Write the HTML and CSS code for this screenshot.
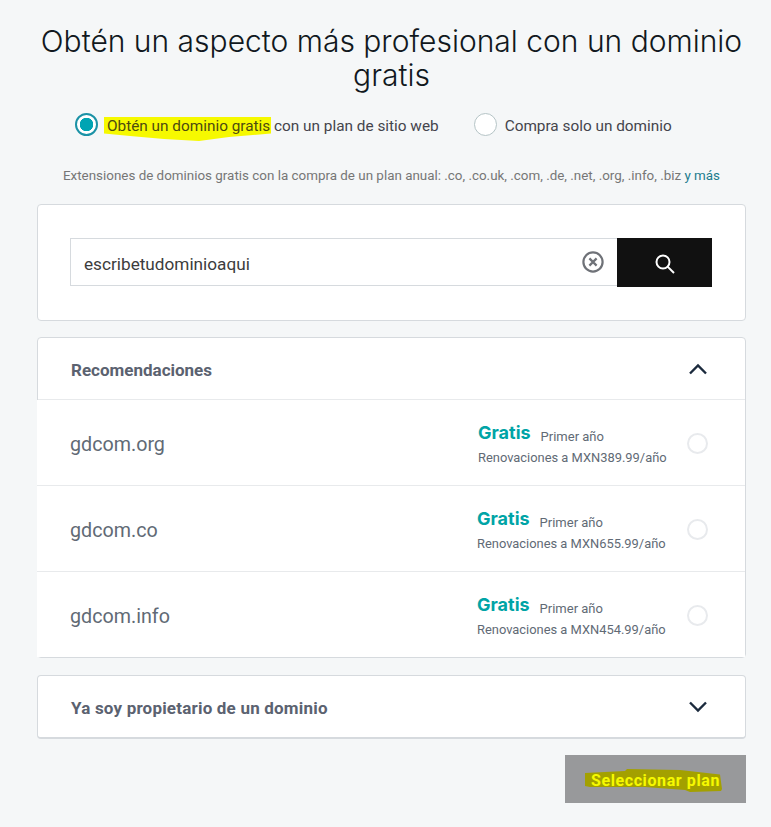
FILE: index.html
```html
<!DOCTYPE html>
<html lang="es">
<head>
  <meta charset="UTF-8" />
  <title>Obtén un dominio gratis</title>
  <link rel="stylesheet" href="styles.css">
</head>
<body>
  <h1 class="title">Obtén un aspecto más profesional con un dominio gratis</h1>

  <div class="mode-row">
    <div class="mode mode-free">
      <span class="radio radio-on"></span>
      <span class="mode-label"><span class="marker">
        <svg class="marker-ink" width="167" height="24" viewBox="0 0 167 24"><path d="M0 0 L167 0 L167 16.5 L125 20 L95 24 L60 22 L26 19 L0 16.5 Z" fill="#f6f900"/></svg>
        <span class="marker-text">Obtén un dominio gratis</span></span> con un plan de sitio web</span>
    </div>
    <div class="mode mode-only">
      <span class="radio"></span>
      <span class="mode-label">Compra solo un dominio</span>
    </div>
  </div>

  <p class="note">Extensiones de dominios gratis con la compra de un plan anual: .co, .co.uk, .com, .de, .net, .org, .info, .biz <a class="more" href="#">y más</a></p>

  <div class="card search-card">
    <div class="search">
      <div class="search-field">
        <span class="search-text">escribetudominioaqui</span>
        <svg class="clear-icon" width="24" height="24" viewBox="0 0 24 24" fill="none" stroke="#6f7278"><circle cx="12" cy="12" r="9.6" stroke-width="2.2"/><path d="M8.4 8.4l7.2 7.2M15.6 8.4l-7.2 7.2" stroke-width="2.2"/></svg>
      </div>
      <button class="search-btn" type="button">
        <svg width="22" height="24" viewBox="0 0 22 24" fill="none" stroke="#fff" stroke-width="2"><circle cx="9" cy="11" r="6.5"/><path d="M13.6 15.6l6.4 6.4"/></svg>
      </button>
    </div>
  </div>

  <div class="card list-card">
    <div class="list-head">
      <span class="head-title">Recomendaciones</span>
      <svg width="20" height="12" viewBox="0 0 20 12" fill="none" stroke="#1b2a3d" stroke-width="2.4"><path d="M2 10.5l8-8 8 8"/></svg>
    </div>
    <div class="domain-row">
      <span class="domain">gdcom.org</span>
      <div class="price price-first">
        <div class="price-top"><span class="free">Gratis</span><span class="first-year">Primer año</span></div>
        <div class="renew">Renovaciones a MXN389.99/año</div>
      </div>
      <span class="pick"></span>
    </div>
    <div class="domain-row">
      <span class="domain">gdcom.co</span>
      <div class="price">
        <div class="price-top"><span class="free">Gratis</span><span class="first-year">Primer año</span></div>
        <div class="renew">Renovaciones a MXN655.99/año</div>
      </div>
      <span class="pick"></span>
    </div>
    <div class="domain-row">
      <span class="domain">gdcom.info</span>
      <div class="price">
        <div class="price-top"><span class="free">Gratis</span><span class="first-year">Primer año</span></div>
        <div class="renew">Renovaciones a MXN454.99/año</div>
      </div>
      <span class="pick"></span>
    </div>
  </div>

  <div class="card owner-card">
    <span class="head-title owner-title">Ya soy propietario de un dominio</span>
    <svg width="20" height="12" viewBox="0 0 20 12" fill="none" stroke="#1b2a3d" stroke-width="2.4"><path d="M2 1.5l8 8 8-8"/></svg>
  </div>

  <div class="actions">
    <button class="select-btn" type="button">
      <svg class="marker-ink" width="137" height="23" viewBox="0 0 137 23"><path d="M0 4 L40 2 L42 0 L95 1 L135 5.5 L137 20 L136 22 L105 23 L100 21 L60 18 L5 18 L0 17 Z" fill="#a3a000"/></svg>
      <span class="select-text">Seleccionar plan</span>
    </button>
  </div>
</body>
</html>
```

FILE: styles.css
```css
* { box-sizing: border-box; }
body {
  font-family: 'Roboto', sans-serif;
  background-color: #f5f7f8;
  color: #44444c;
  margin: 0;
  padding: 24px 25px 0 37px;
}
.title {
  font-family: 'Inter', sans-serif;
  font-weight: 300;
  font-size: 30px;
  line-height: 34px;
  color: #111820;
  text-align: center;
  margin: 0 -12px;
}
.mode-row {
  display: flex;
  margin-top: 20px;
  padding-left: 38px;
  height: 24px;
}
.mode { display: flex; align-items: center; }
.mode-only { margin-left: 35px; }
.radio {
  width: 23px;
  height: 23px;
  border-radius: 50%;
  border: 1px solid #b5c4c6;
  background: #fff;
  margin-right: 9px;
}
.mode-only .radio { margin-right: 8px; }
.radio-on {
  border-color: #1b92a6;
  border-width: 2px;
  background: radial-gradient(circle, #00a4b3 0 6.5px, #fff 7px);
}
.mode-label { font-size: 15.35px; padding-top: 3px; }
.marker { position: relative; }
.marker-ink { position: absolute; left: -3px; top: 0; }
.marker-text { position: relative; color: #4d4a10; }
.note {
  font-size: 13.4px;
  color: #767676;
  text-align: center;
  margin: 31px 0 0;
  line-height: 18px;
}
.more { color: #1b7c8e; text-decoration: none; }
.card {
  background: #fff;
  border: 1px solid #d6dade;
  border-radius: 4px;
}
.search-card {
  margin-top: 19px;
  height: 117px;
  padding: 33px 33px 0 32px;
}
.search { display: flex; height: 49px; }
.search-field {
  flex: 1;
  height: 48px;
  border: 1px solid #d6dade;
  border-right: none;
  display: flex;
  align-items: center;
  justify-content: space-between;
  padding: 0 12px 0 13px;
  font-size: 17.2px;
  color: #3c3c3c;
}
.search-text { padding-top: 3px; }
.search-btn {
  width: 95px;
  border: none;
  background: #111;
  padding: 0;
  display: flex;
  align-items: center;
  justify-content: center;
}
.list-card { margin-top: 16px; height: 321px; }
.list-head {
  height: 62px;
  display: flex;
  align-items: center;
  justify-content: space-between;
  padding: 0 37px 0 33px;
  border-bottom: 1px solid #e8eaec;
}
.head-title { font-size: 17px; font-weight: 700; color: #5b6270; padding-top: 3px; }
.owner-title { letter-spacing: 0.2px; }
.domain-row {
  height: 86px;
  display: flex;
  align-items: center;
  background: #fff;
  margin-left: -1px;
  padding: 0 37px 0 33px;
  border-bottom: 1px solid #e8eaec;
}
.domain-row:last-child { border-bottom: none; height: 85px; }
.domain { font-size: 19.7px; color: #616a75; flex: 1; padding-top: 3px; }
.price { width: 189px; margin-top: 1px; white-space: nowrap; }
.price-first { width: 188px; }
.price-top { display: flex; align-items: flex-start; }
.free { font-family: 'Inter', sans-serif; font-size: 18px; font-weight: 700; color: #00a4a6; }
.first-year { font-size: 13px; color: #616a75; margin-left: 10px; margin-top: 7px; }
.renew { font-size: 12.9px; color: #616a75; margin-top: 6px; }
.pick {
  width: 21px;
  height: 21px;
  border-radius: 50%;
  border: 2px solid #e8eaed;
  margin: 1px 0 0 21px;
}
.owner-card {
  margin-top: 17px;
  height: 64px;
  display: flex;
  align-items: center;
  justify-content: space-between;
  padding: 0 37px 0 33px;
  border-bottom-width: 2px;
}
.actions { display: flex; justify-content: flex-end; margin-top: 16px; }
.select-btn {
  position: relative;
  width: 181px;
  height: 48px;
  border: none;
  background: #98999b;
  font-family: 'Roboto', sans-serif;
  font-size: 16px;
  font-weight: 700;
  letter-spacing: 0.6px;
  color: #f6f900;
  padding: 3px 0 0;
}
.select-btn .marker-ink { left: 20px; top: 14px; }
.select-text { position: relative; }
```
